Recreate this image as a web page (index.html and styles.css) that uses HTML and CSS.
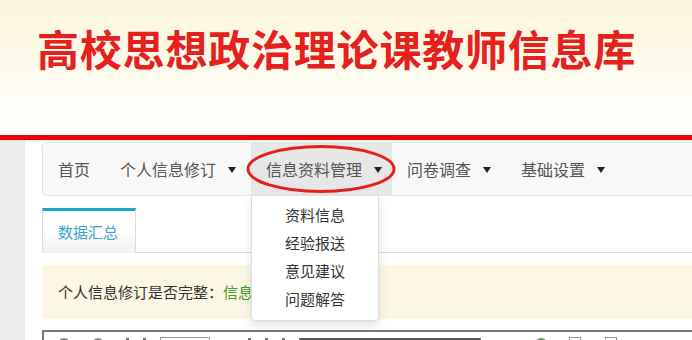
FILE: index.html
```html
<!DOCTYPE html>
<html lang="zh-CN">
<head>
  <meta charset="UTF-8">
  <meta name="viewport" content="width=device-width, initial-scale=1.0">
  <title>高校思想政治理论课教师信息库</title>
  <link rel="stylesheet" href="styles.css">
</head>
<body>
  <!-- 顶部标题 -->
  <header class="banner">
    <h1>高校思想政治理论课教师信息库</h1>
  </header>
  <div class="red-line"></div>

  <div class="page">
    <div class="side"></div>

    <div class="main">
      <!-- 导航栏 -->
      <nav class="navbar">
        <ul class="nav">
          <li><a href="#">首页</a></li>
          <li><a href="#">个人信息修订<span class="caret"></span></a></li>
          <li class="active">
            <a href="#">信息资料管理<span class="caret"></span></a>
            <svg class="mark" width="152" height="50" viewBox="0 0 152 50">
              <ellipse cx="76" cy="25" rx="73" ry="22.5" fill="none" stroke="#e3211c" stroke-width="3"/>
            </svg>
            <ul class="dropdown">
              <li><a href="#">资料信息</a></li>
              <li><a href="#">经验报送</a></li>
              <li><a href="#">意见建议</a></li>
              <li><a href="#">问题解答</a></li>
            </ul>
          </li>
          <li><a href="#">问卷调查<span class="caret"></span></a></li>
          <li><a href="#">基础设置<span class="caret"></span></a></li>
        </ul>
      </nav>

      <!-- 标签页 -->
      <div class="tabs">
        <a href="#" class="tab active">数据汇总</a>
      </div>

      <div class="alert">
        个人信息修订是否完整：<span class="ok">信息完整</span>
      </div>

      <!-- 编辑器工具栏 -->
      <div class="editor">
        <div class="toolbar">
          <span class="ico round"></span>
          <span class="ico round"></span>
          <span class="ico bar"></span>
          <span class="ico bar"></span>
          <span class="ico box wide"></span>
          <span class="ico bar"></span>
          <span class="ico bar"></span>
          <span class="ico bar"></span>
          <span class="ico select"></span>
          <span class="ico round green"></span>
          <span class="ico box"></span>
          <span class="ico box"></span>
        </div>
      </div>
    </div>
  </div>
</body>
</html>
```

FILE: styles.css
```css
body {
  margin: 0;
  font-family: "Noto Sans CJK SC", "Noto Sans", sans-serif;
  font-size: 15px;
  color: #333;
  background: #fff;
  overflow: hidden;
}
a {
  text-decoration: none;
  color: inherit;
}
ul {
  list-style: none;
  margin: 0;
  padding: 0;
}

.banner {
  height: 135px;
  background: linear-gradient(to bottom, #fcf5da, #fefbee 55%, #ffffff);
}
.banner h1 {
  margin: 0;
  padding: 23px 0 0 37px;
  font-size: 42px;
  line-height: 50px;
  font-weight: bold;
  letter-spacing: 0.8px;
  color: #e5211d;
}
.red-line {
  height: 5px;
  background: #ee0000;
}

.page {
  display: flex;
  min-height: 220px;
}
.side {
  width: 25px;
  background: #ececec;
  flex-shrink: 0;
}
.main {
  flex: 1;
  padding: 2px 0 0 17px;
}

.navbar {
  height: 52px;
  width: calc(100% + 20px);
  background: #f8f8f8;
  border: 1px solid #e4e4e4;
  border-radius: 4px;
  margin-bottom: 12px;
}
.nav {
  display: flex;
  height: 100%;
}
.nav > li {
  position: relative;
}
.nav > li > a {
  display: flex;
  align-items: center;
  height: 52px;
  padding: 0 15px;
  font-size: 16px;
  color: #555;
}
.nav > li.active > a {
  background: #e7e7e7;
  padding-right: 10px;
}
.caret {
  width: 0;
  height: 0;
  margin-left: 12px;
  margin-top: 1px;
  border-top: 6px solid #222;
  border-left: 4px solid transparent;
  border-right: 4px solid transparent;
}
.mark {
  position: absolute;
  left: -6px;
  top: 1px;
  z-index: 3;
}

.dropdown {
  position: absolute;
  top: 53px;
  left: 0;
  width: 126px;
  padding: 5px 0 7px;
  background: #fff;
  border: 1px solid rgba(0, 0, 0, 0.13);
  border-top: none;
  border-radius: 0 0 4px 4px;
  box-shadow: 0 4px 10px rgba(0, 0, 0, 0.12);
  z-index: 2;
}
.dropdown a {
  display: block;
  padding-left: 33px;
  line-height: 28px;
  font-size: 15px;
  color: #333;
}

.tabs {
  display: flex;
  border-bottom: 1px solid #dcdcdc;
  margin-bottom: 12px;
  width: calc(100% + 20px);
}
.tab {
  width: 62px;
  padding: 0 15px;
  height: 42px;
  line-height: 41px;
  margin-bottom: -1px;
  border: 1px solid #dcdcdc;
  border-top: 3px solid #1aa6c6;
  border-bottom: none;
  background: linear-gradient(to bottom, #ffffff 40%, #f1f1f1);
  color: #3aa3c4;
  font-size: 15px;
}

.alert {
  height: 54px;
  line-height: 54px;
  padding-left: 16px;
  background: #fcf7e4;
  width: calc(100% + 20px);
  font-size: 15px;
  color: #333;
}
.alert .ok {
  color: #3d9a2c;
}

.editor {
  margin-top: 11px;
  height: 40px;
  border: 2px solid #777;
  border-right: none;
}
.toolbar {
  display: flex;
  align-items: center;
  gap: 14px;
  padding: 5px 0 0 14px;
}
.ico {
  display: block;
  height: 12px;
  width: 3px;
  background: #777;
}
.ico.round {
  width: 12px;
  border-radius: 50%;
  background: #888;
  margin-right: 8px;
}
.ico.green {
  background: #49a64a;
  margin-left: 40px;
}
.ico.box {
  width: 10px;
  background: #fff;
  border: 1px solid #999;
  margin-right: 10px;
}
.ico.wide {
  width: 48px;
  margin-right: 24px;
}
.ico.select {
  width: 180px;
  height: 10px;
  background: #fff;
  border-top: 2px solid #555;
  border-left: 1px solid #999;
  border-right: 1px solid #999;
}
```
